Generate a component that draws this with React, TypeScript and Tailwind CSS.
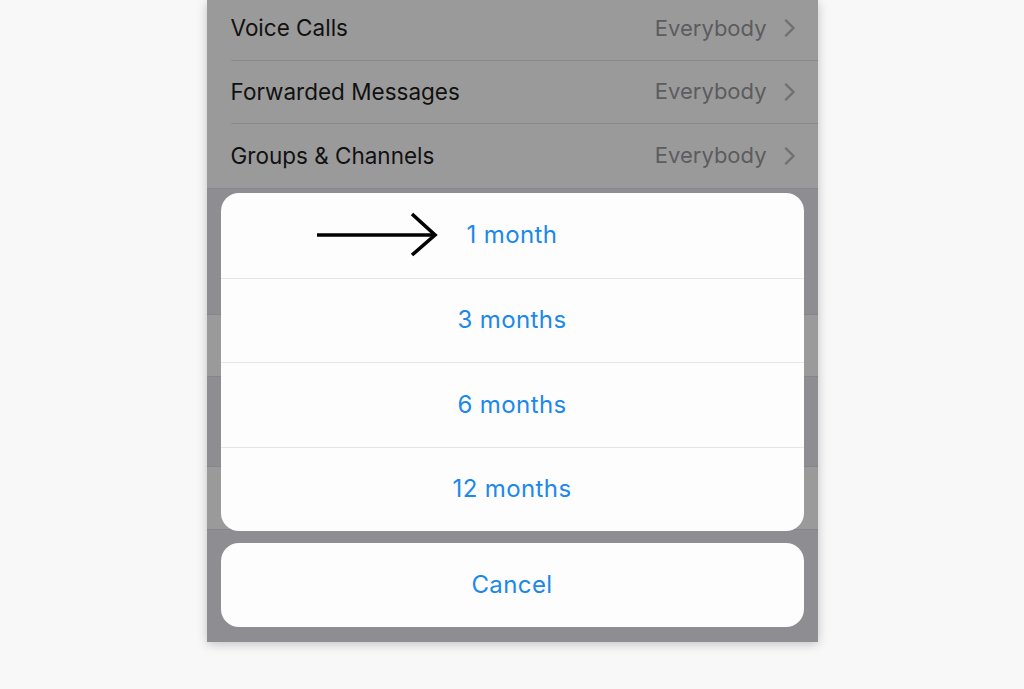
import React from "react";

const settings = [
  { label: "Voice Calls", value: "Everybody" },
  { label: "Forwarded Messages", value: "Everybody" },
  { label: "Groups & Channels", value: "Everybody" },
];

const periods = ["1 month", "3 months", "6 months", "12 months"];

function Chevron() {
  return (
    <svg width="12" height="18" viewBox="0 0 12 18" fill="none" className="ml-[17px]">
      <path d="M2 1.5 L9.5 9 L2 16.5" stroke="#707073" strokeWidth="2.4" strokeLinecap="round" strokeLinejoin="round" />
    </svg>
  );
}

function Arrow() {
  return (
    <svg
      width="124"
      height="46"
      viewBox="0 0 124 46"
      fill="none"
      className="absolute left-[94px] top-[19px]"
    >
      <path d="M2 23 H120" stroke="#000" strokeWidth="3.6" />
      <path d="M97 2 L120 23 L97 43" stroke="#000" strokeWidth="3.6" strokeLinejoin="miter" />
    </svg>
  );
}

function App() {
  return (
    <div
      className="flex h-[689px] w-full justify-center bg-[#f8f8f8]"
      style={{ fontFamily: "Inter, 'Liberation Sans', sans-serif" }}
    >
      <div className="relative h-[642px] w-[611px] overflow-hidden bg-[#8e8e92] shadow-[0_2px_10px_rgba(0,0,0,0.22)]">
        <div className="-mt-[3px] bg-[#9a9a9a]">
          {settings.map((row, i) => (
            <div key={row.label} className="pl-[24px]">
              <div
                className={
                  "flex h-[63.5px] items-center pr-[22px] " +
                  (i < settings.length - 1 ? "border-b border-[#8a8a8a]" : "")
                }
              >
                <span className="flex-1 text-[22.5px] text-[#111]">{row.label}</span>
                <span className="text-[22px] text-[#5c5c5f]">{row.value}</span>
                <Chevron />
              </div>
            </div>
          ))}
        </div>
        <div className="h-[126px] border-t border-[#88888b]" />
        <div className="h-[63px] border-y border-[#86868a] bg-[#9a9a9a]" />
        <div className="h-[89px]" />
        <div className="h-[64px] border-y border-[#86868a] bg-[#9a9a9a]" />

        <div className="absolute inset-x-[14px] bottom-[15px] flex flex-col gap-[12px]">
          <div className="overflow-hidden rounded-[18px] bg-[#fdfdfe]">
            {periods.map((p, i) => (
              <div
                key={p}
                className={
                  "relative flex h-[84.5px] items-center justify-center text-[24px] tracking-[0.4px] text-[#1b88ea] " +
                  (i > 0 ? "border-t border-[#e6e6ea]" : "")
                }
              >
                {i === 0 && <Arrow />}
                {p}
              </div>
            ))}
          </div>
          <div className="flex h-[84px] items-center justify-center rounded-[18px] bg-[#fdfdfe] text-[24px] tracking-[0.4px] text-[#1b88ea]">
            Cancel
          </div>
        </div>
      </div>
    </div>
  );
}

export default App;
